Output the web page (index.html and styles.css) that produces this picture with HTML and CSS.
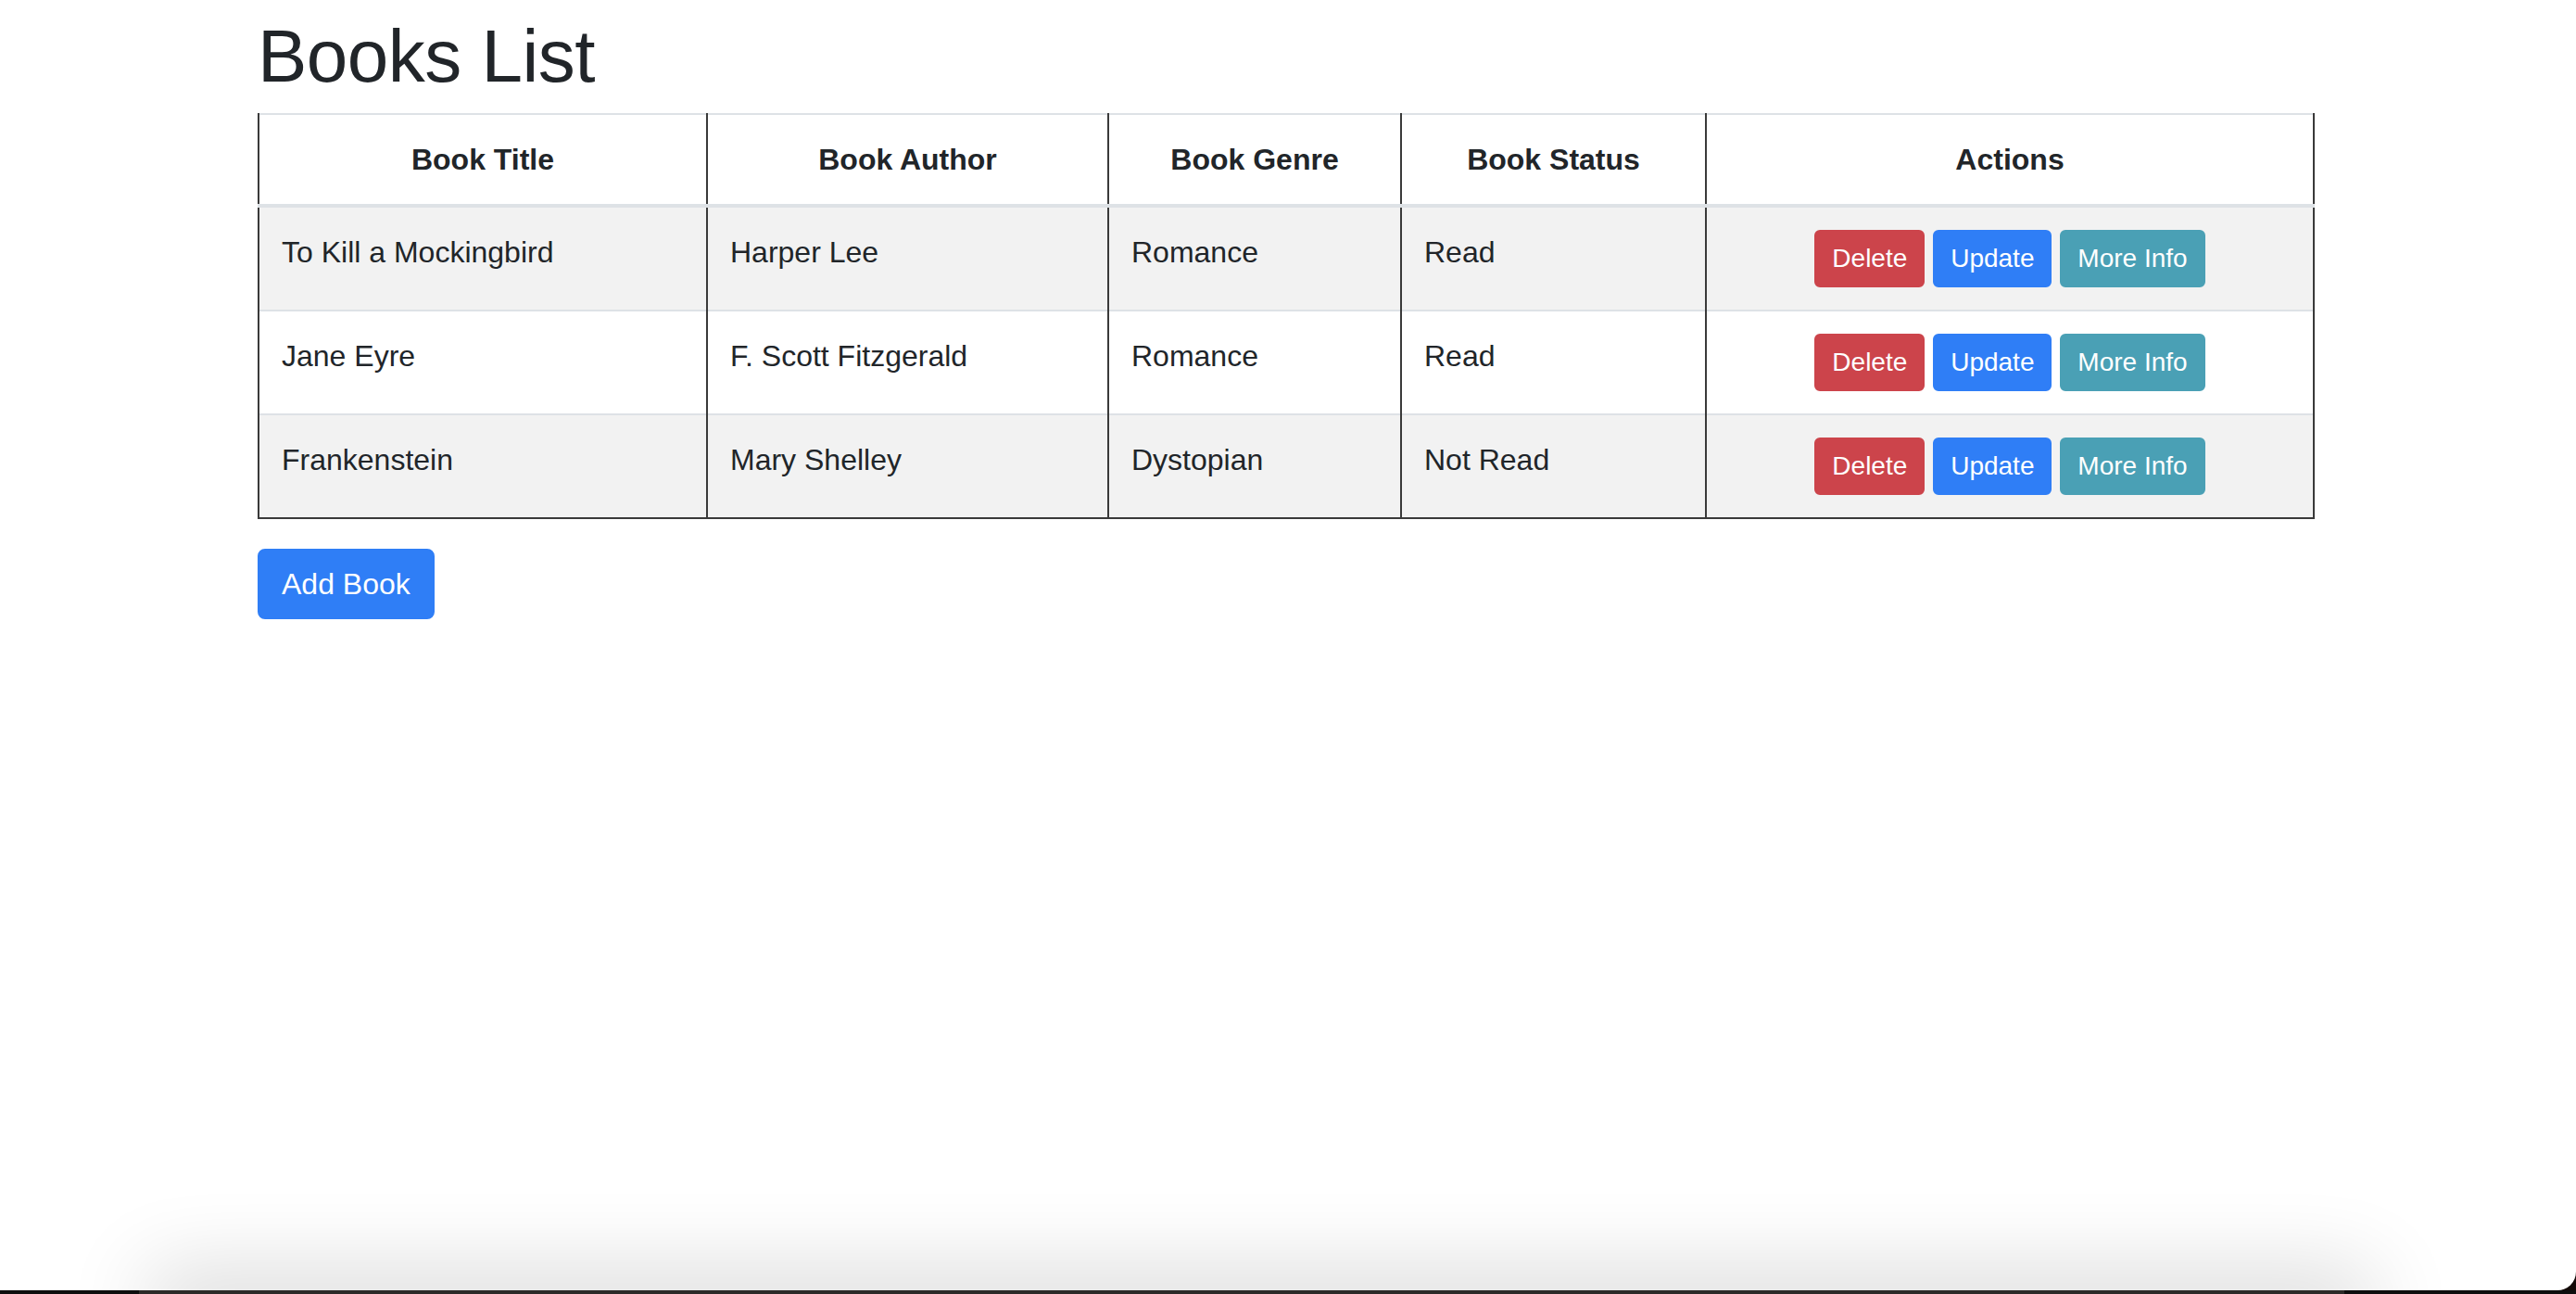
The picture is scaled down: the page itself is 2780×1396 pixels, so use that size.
FILE: index.html
```html
<!DOCTYPE html>
<html lang="en">
<head>
<meta charset="utf-8">
<title>Books List</title>
<link rel="stylesheet" href="styles.css">
</head>
<body>
<div class="window">
  <div class="container">
    <h1 class="title">Books List</h1>
    <table class="books">
      <colgroup>
        <col class="c-title">
        <col class="c-author">
        <col class="c-genre">
        <col class="c-status">
        <col class="c-actions">
      </colgroup>
      <thead>
        <tr>
          <th>Book Title</th>
          <th>Book Author</th>
          <th>Book Genre</th>
          <th>Book Status</th>
          <th>Actions</th>
        </tr>
      </thead>
      <tbody>
        <tr class="striped">
          <td>To Kill a Mockingbird</td>
          <td>Harper Lee</td>
          <td>Romance</td>
          <td>Read</td>
          <td class="actions"><button class="btn btn-sm btn-danger">Delete</button> <button class="btn btn-sm btn-primary">Update</button> <button class="btn btn-sm btn-info">More Info</button></td>
        </tr>
        <tr>
          <td>Jane Eyre</td>
          <td>F. Scott Fitzgerald</td>
          <td>Romance</td>
          <td>Read</td>
          <td class="actions"><button class="btn btn-sm btn-danger">Delete</button> <button class="btn btn-sm btn-primary">Update</button> <button class="btn btn-sm btn-info">More Info</button></td>
        </tr>
        <tr class="striped">
          <td>Frankenstein</td>
          <td>Mary Shelley</td>
          <td>Dystopian</td>
          <td>Not Read</td>
          <td class="actions"><button class="btn btn-sm btn-danger">Delete</button> <button class="btn btn-sm btn-primary">Update</button> <button class="btn btn-sm btn-info">More Info</button></td>
        </tr>
      </tbody>
    </table>
    <button class="btn btn-primary btn-add">Add Book</button>
  </div>
</div>
<div class="dock-strip"><div class="dock-bar"></div></div>
</body>
</html>
```

FILE: styles.css
```css
html, body {
  margin: 0;
  padding: 0;
}

body {
  background: #120806;
  font-family: "Liberation Sans", Arial, sans-serif;
  color: #212529;
  font-size: 32px;
  line-height: 1.5;
  overflow: hidden;
}

.window {
  position: relative;
  height: 1392px;
  background: #ffffff;
  border-bottom-right-radius: 20px;
  overflow: hidden;
}

.window::after {
  content: "";
  position: absolute;
  left: 180px;
  right: 240px;
  top: 100%;
  height: 30px;
  box-shadow: 0 0 90px 20px rgba(0, 0, 0, 0.16);
}

.container {
  width: 2218px;
  margin-left: 278px;
  padding-top: 13px;
}

.title {
  margin: 0 0 13px 0;
  font-size: 80px;
  font-weight: 500;
  line-height: 96px;
  letter-spacing: -0.5px;
  color: #212529;
}

.books {
  width: 2218px;
  table-layout: fixed;
  border-collapse: collapse;
  border-top: 2px solid #dee2e6;
  border-bottom: 2px solid #3a3a3a;
  margin-bottom: 32px;
}

.c-title { width: 484px; }
.c-author { width: 433px; }
.c-genre { width: 316px; }
.c-status { width: 329px; }
.c-actions { width: 656px; }

.books th,
.books td {
  padding: 24px;
  border-left: 2px solid #3a3a3a;
  border-right: 2px solid #3a3a3a;
  line-height: 48px;
}

.books th {
  font-weight: 700;
  text-align: center;
  vertical-align: bottom;
  border-bottom: 4px solid #dee2e6;
}

.books td {
  vertical-align: top;
  border-top: 2px solid #dee2e6;
}

.books thead + tbody tr:first-child td {
  border-top: none;
}

.striped td {
  background: #f2f2f2;
}

.actions {
  text-align: center;
}

.btn {
  display: inline-block;
  font-family: "Liberation Sans", Arial, sans-serif;
  font-weight: 400;
  color: #ffffff;
  border: 2px solid transparent;
  margin: 0;
  cursor: pointer;
  vertical-align: middle;
}

.btn-sm {
  font-size: 28px;
  line-height: 42px;
  padding: 8px 17px;
  border-radius: 6px;
}

.btn-danger {
  background: #cc444b;
  border-color: #cc444b;
}

.btn-primary {
  background: #2f7ef6;
  border-color: #2f7ef6;
}

.btn-info {
  background: #4aa0b5;
  border-color: #4aa0b5;
}

.btn-add {
  font-size: 32px;
  line-height: 48px;
  padding: 12px 24px;
  border-radius: 8px;
}

.dock-strip {
  height: 4px;
  background: #0e0e0e;
  position: relative;
}

.dock-bar {
  margin-left: 150px;
  width: 2380px;
  height: 4px;
  background: #2c2a28;
}
```
